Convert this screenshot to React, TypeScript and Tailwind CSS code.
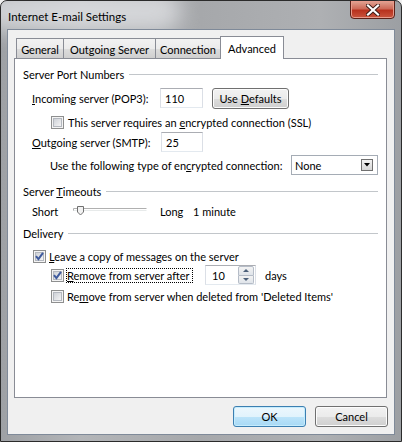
import React from "react";

const font = "font-['Lato','Noto_Sans',sans-serif]";

function Check({ checked }: { checked?: boolean }) {
    return (
        <svg width="13" height="13" viewBox="0 0 13 13" className="shrink-0">
            <defs>
                <linearGradient id="cbin" x1="0" y1="0" x2="1" y2="1">
                    <stop offset="0" stopColor="#cbcfd5" />
                    <stop offset="1" stopColor="#f7f7f7" />
                </linearGradient>
            </defs>
            <rect x="0.5" y="0.5" width="12" height="12" fill="#f4f4f4" stroke="#8e8f8f" />
            <rect x="2.5" y="2.5" width="8" height="8" fill="url(#cbin)" stroke="#b4b8bf" />
            {checked && (
                <path d="M3 6.2 L5.4 9.2 L10 2.8" fill="none" stroke="#3f5b9e" strokeWidth="2" />
            )}
        </svg>
    );
}

function Group({ title }: { title: React.ReactNode }) {
    return (
        <div className="flex items-center h-[16px] gap-[5px]">
            <span>{title}</span>
            <div className="flex-1 border-t border-[#c2c6ca]" />
        </div>
    );
}

function TextBox({ value, w }: { value: string; w: string }) {
    return (
        <div className={`${w} h-[20px] bg-white border border-[#abadb3] border-b-[#e3e9ef] border-x-[#dbdfe6] flex items-center pl-[4px]`}>
            <span>{value}</span>
        </div>
    );
}

function Button({ children, w, primary }: { children: React.ReactNode; w: string; primary?: boolean }) {
    return (
        <div
            className={`${w} h-[21px] rounded-[3px] border flex items-center justify-center ${
                primary
                    ? "border-[#3c7fb1] bg-[linear-gradient(#ecf7fd_0%,#e1f3fc_50%,#bde4f9_50%,#a7d9f5_100%)] shadow-[inset_0_0_0_1px_#c5ecfd]"
                    : "border-[#707070] bg-[linear-gradient(#f2f2f2_0%,#ebebeb_50%,#dddddd_50%,#cfcfcf_100%)] shadow-[inset_0_0_0_1px_#fcfcfc]"
            }`}
        >
            <span>{children}</span>
        </div>
    );
}

function Tab({ label, w, active }: { label: string; w: string; active?: boolean }) {
    if (active) {
        return (
            <div className={`${w} h-[23px] -mb-px relative z-10 bg-white border border-b-0 border-[#898c95] flex items-start justify-center pt-[6px]`}>
                <span>{label}</span>
            </div>
        );
    }
    return (
        <div className={`${w} h-[20px] -mr-px bg-[linear-gradient(#f2f2f2,#ebebeb_50%,#dddddd_50%,#cfcfcf)] border border-b-0 border-[#898c95] flex items-center justify-center pt-px`}>
            <span>{label}</span>
        </div>
    );
}

export default function App() {
    return (
        <div className={`${font} text-[11px] leading-none text-black whitespace-nowrap w-[402px] h-[442px] bg-[#f0f0f0]`}>
            <div className="w-[402px] h-[442px] rounded-t-[7px] border border-[#2b2b2b] bg-[linear-gradient(90deg,#9ea1a5,#b3b5b8_20%,#a6a8ab_50%,#aeb0b3_80%,#9c9fa3)] flex flex-col relative overflow-hidden">
                {/* title glow */}
                <div className="absolute left-[-20px] top-[-10px] w-[200px] h-[40px] rounded-full bg-[#e6e7e9]/70 blur-[10px]" />

                {/* title bar */}
                <div className="h-[28px] flex items-start relative">
                    <span className="ml-[7px] mt-[10px] text-[11.5px]">Internet E-mail Settings</span>
                    <div className="ml-auto mr-[6px] w-[45px] h-[19px] -mt-px rounded-b-[4px] border border-[#5b2118] bg-[linear-gradient(#e2a595,#cd6a58_45%,#b8321e_55%,#c9553e)] shadow-[inset_0_0_0_1px_#e89b8c] flex items-center justify-center">
                        <svg width="14" height="12" viewBox="0 0 14 12">
                            <path d="M2 1.5 L12 10.5 M12 1.5 L2 10.5" stroke="#3c1c16" strokeWidth="4" strokeLinecap="square" />
                            <path d="M2 1.5 L12 10.5 M12 1.5 L2 10.5" stroke="#ffffff" strokeWidth="2.2" strokeLinecap="square" />
                        </svg>
                    </div>
                </div>

                {/* client area */}
                <div className="mx-[6px] h-[406px] bg-[#f0f0f0] border border-[#7f8a99] flex flex-col relative">
                    {/* tabs */}
                    <div className="flex items-end pl-[8px] mt-[5px] h-[23px]">
                        <Tab label="General" w="w-[48px]" />
                        <Tab label="Outgoing Server" w="w-[93px]" />
                        <Tab label="Connection" w="w-[66px]" />
                        <Tab label="Advanced" w="w-[64px]" active />
                    </div>

                    {/* panel */}
                    <div className="ml-[6px] w-[373px] h-[340px] bg-white border border-[#898c95] px-[8px] pt-[7px] flex flex-col">
                        <Group title="Server Port Numbers" />

                        <div className="flex items-center h-[20px] mt-[6px] pl-[9px]">
                            <span className="w-[128px]"><u>I</u>ncoming server (POP3):</span>
                            <TextBox value="110" w="w-[43px]" />
                            <div className="ml-[9px]">
                                <Button w="w-[77px]">Use <u>D</u>efaults</Button>
                            </div>
                        </div>

                        <div className="flex items-center h-[13px] mt-[8px] pl-[28px] gap-[4px]">
                            <Check />
                            <span>This server requires an <u>e</u>ncrypted connection (SSL)</span>
                        </div>

                        <div className="flex items-center h-[20px] mt-[3px] pl-[9px]">
                            <span className="w-[129px]"><u>O</u>utgoing server (SMTP):</span>
                            <TextBox value="25" w="w-[42px]" />
                        </div>

                        <div className="flex items-center h-[20px] mt-[3px] pl-[27px]">
                            <span className="w-[241px]">Use the following type of en<u>c</u>rypted connection:</span>
                            <div className="w-[87px] h-[20px] bg-white border border-[#a5acb5] flex items-center pl-[3px] pr-[4px]">
                                <span>None</span>
                                <div className="ml-auto w-[12px] h-[12px] border border-[#707070] bg-[linear-gradient(#f2f2f2,#d6d6d6)] flex items-center justify-center">
                                    <svg width="6" height="4" viewBox="0 0 6 4">
                                        <path d="M0 0 H6 L3 3.5 Z" fill="#000" />
                                    </svg>
                                </div>
                            </div>
                        </div>

                        <div className="mt-[8px]">
                            <Group title={<>Server <u>T</u>imeouts</>} />
                        </div>

                        <div className="flex items-center h-[20px] mt-[2px] pl-[9px]">
                            <span className="w-[41px]">Short</span>
                            <svg width="76" height="12" viewBox="0 0 76 12" className="shrink-0">
                                <path d="M0.5 6 V3.5 H73.5" fill="none" stroke="#b0b0b0" />
                                <path d="M0.5 5.5 H73.5" stroke="#e7eaea" />
                                <path d="M4.5 1.5 H10.5 V7 L7.5 10 L4.5 7 Z" fill="#f2f2f2" stroke="#707070" />
                            </svg>
                            <span className="ml-[11px] w-[33px]">Long</span>
                            <span>1 minute</span>
                        </div>

                        <div className="mt-[4px]">
                            <Group title="Delivery" />
                        </div>

                        <div className="flex items-center h-[14px] mt-[8px] pl-[10px] gap-[3px]">
                            <Check checked />
                            <span><u>L</u>eave a copy of messages on the server</span>
                        </div>

                        <div className="flex items-center h-[20px] mt-[2px] pl-[28px]">
                            <Check checked />
                            <span className="ml-[2px] w-[127px] h-[15px] border border-dotted border-black flex items-center"><span><u>R</u>emove from server after</span></span>
                            <div className="ml-[12px] w-[51px] h-[20px] bg-white border border-[#abadb3] border-b-[#e3e9ef] border-x-[#dbdfe6] flex items-center pl-[6px] relative">
                                <span>10</span>
                                <div className="absolute right-[1px] top-0 w-[16px] h-[18px] flex flex-col">
                                    <div className="flex-1 border border-[#b5bcc7] rounded-t-[2px] bg-[linear-gradient(#f3f3f3,#dfe4ea)] flex items-center justify-center">
                                        <svg width="6" height="3" viewBox="0 0 6 3"><path d="M0 3 L3 0 L6 3 Z" fill="#4c607a" /></svg>
                                    </div>
                                    <div className="flex-1 border border-t-0 border-[#b5bcc7] rounded-b-[2px] bg-[linear-gradient(#f3f3f3,#dfe4ea)] flex items-center justify-center">
                                        <svg width="6" height="3" viewBox="0 0 6 3"><path d="M0 0 L6 0 L3 3 Z" fill="#4c607a" /></svg>
                                    </div>
                                </div>
                            </div>
                            <span className="ml-[9px]">days</span>
                        </div>

                        <div className="flex items-center h-[13px] mt-[5px] pl-[28px] gap-[3px]">
                            <Check />
                            <span>Re<u>m</u>ove from server when deleted from 'Deleted Items'</span>
                        </div>
                    </div>

                    {/* buttons */}
                    <div className="flex justify-end gap-[9px] mt-[8px] pr-[6px]">
                        <Button w="w-[73px]" primary>OK</Button>
                        <Button w="w-[73px]">Cancel</Button>
                    </div>
                </div>
            </div>
        </div>
    );
}
